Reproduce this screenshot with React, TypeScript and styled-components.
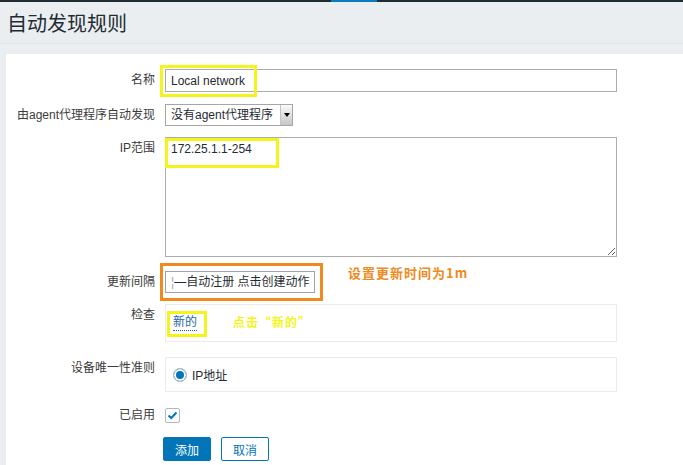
import React from "react";
import styled, { createGlobalStyle } from "styled-components";

const GlobalStyle = createGlobalStyle`
  html, body {
    margin: 0;
    padding: 0;
  }
  body {
    background: #ebeef0;
    font-family: "Liberation Sans", "Noto Sans CJK SC", sans-serif;
    font-size: 12px;
    color: #1f2c33;
    overflow: hidden;
  }
`;

const TopBar = styled.div`
  display: flex;
  height: 2px;
  background: #1f2c33;
`;

const TopBarMark = styled.span`
  margin-left: 331px;
  width: 46px;
  background: #0a7bc2;
`;

const Header = styled.header`
  height: 41px;
  display: flex;
  align-items: center;
  padding-left: 7px;
  border-bottom: 1px solid #dfe3e6;
`;

const Title = styled.h1`
  margin: 0;
  font-family: "Noto Sans CJK SC", sans-serif;
  font-weight: 400;
  font-size: 20px;
  line-height: 26px;
  color: #1f2c33;
`;

const Panel = styled.main`
  margin: 10px 0 0 6px;
  background: #fff;
  padding: 15px 0 4px;
`;

const Row = styled.div<{ $gap: number }>`
  display: grid;
  grid-template-columns: 149px 452px;
  column-gap: 10px;
  margin-top: ${(p) => p.$gap}px;
`;

const Label = styled.label<{ $lh?: number }>`
  text-align: right;
  line-height: ${(p) => p.$lh ?? 22}px;
  color: #3b3b3b;
  white-space: nowrap;
`;

const Field = styled.div`
  position: relative;
  display: flex;
  align-items: center;
`;

const TextInput = styled.input`
  box-sizing: border-box;
  width: 452px;
  height: 23px;
  margin: 0;
  padding: 0 5px;
  border: 1px solid #acacac;
  font-family: "Liberation Sans", "Noto Sans CJK SC", sans-serif;
  font-size: 12px;
  color: #1f2c33;
  outline: none;
`;

const SelectBox = styled.div`
  box-sizing: border-box;
  display: flex;
  width: 128px;
  height: 22px;
  border: 1px solid #a6a6a6;
`;

const SelectText = styled.span`
  flex: 1;
  padding-left: 5px;
  line-height: 20px;
  color: #1f2c33;
  white-space: nowrap;
`;

const SelectArrow = styled.span`
  width: 11px;
  display: flex;
  align-items: center;
  justify-content: center;
  border-left: 1px solid #c4c4c4;
  background: linear-gradient(#fbfbfb, #c6c6c6);

  &::after {
    content: "";
    border-left: 3px solid transparent;
    border-right: 3px solid transparent;
    border-top: 4px solid #000;
  }
`;

const TextArea = styled.textarea`
  box-sizing: border-box;
  display: block;
  width: 452px;
  height: 120px;
  margin: 0;
  padding: 3px 5px;
  border: 1px solid #acacac;
  font-family: "Liberation Sans", "Noto Sans CJK SC", sans-serif;
  font-size: 12px;
  line-height: 16px;
  color: #1f2c33;
  outline: none;
`;

const IntervalInput = styled.div`
  box-sizing: border-box;
  width: 150px;
  height: 22px;
  padding-left: 5px;
  border: 1px solid #9aa4aa;
  overflow: hidden;
  white-space: nowrap;
  line-height: 20px;
  color: #1f2c33;
`;

const Clipped = styled.span`
  color: #9aa4aa;
`;

const ListBox = styled.div<{ $h: number }>`
  box-sizing: border-box;
  position: relative;
  width: 452px;
  height: ${(p) => p.$h}px;
  border: 1px solid #ebebeb;
  padding: 10px 7px 0;
`;

const RadioBox = styled(ListBox)`
  display: flex;
  align-items: center;
  gap: 5px;
  padding-top: 0;
`;

const Link = styled.span`
  display: inline-block;
  line-height: 15px;
  color: #1f65a6;
  border-bottom: 1px dotted #1f65a6;
`;

const Radio = styled.span`
  box-sizing: border-box;
  width: 14px;
  height: 14px;
  border-radius: 50%;
  border: 1px solid #acbbc2;
  background: #0275b8;
  box-shadow: inset 0 0 0 2px #fff;
`;

const Checkbox = styled.span`
  box-sizing: border-box;
  width: 15px;
  height: 15px;
  border: 1px solid #acbbc2;
  border-radius: 2px;
  display: flex;
  align-items: center;
  justify-content: center;
`;

const Buttons = styled.div`
  display: flex;
  gap: 10px;
  margin-left: -2px;
`;

const Button = styled.button<{ $primary?: boolean }>`
  box-sizing: border-box;
  width: 48px;
  height: 24px;
  margin: 0;
  padding: 0;
  border: 1px solid #0275b8;
  border-radius: 2px;
  background: ${(p) => (p.$primary ? "#0275b8" : "#fff")};
  color: ${(p) => (p.$primary ? "#fff" : "#0275b8")};
  font-family: "Noto Sans CJK SC", sans-serif;
  font-size: 12px;
`;

/* annotations drawn over the screenshot */
const Mark = styled.span<{ $color: string; $w: number; $h: number; $x: number; $y: number }>`
  position: absolute;
  box-sizing: border-box;
  left: ${(p) => p.$x}px;
  top: ${(p) => p.$y}px;
  width: ${(p) => p.$w}px;
  height: ${(p) => p.$h}px;
  border: 3px solid ${(p) => p.$color};
  pointer-events: none;
`;

const Note = styled.span<{ $color: string; $x: number; $y: number; $size: number }>`
  position: absolute;
  left: ${(p) => p.$x}px;
  top: ${(p) => p.$y}px;
  font-family: "Noto Sans CJK SC", sans-serif;
  font-weight: 700;
  font-size: ${(p) => p.$size}px;
  line-height: 18px;
  letter-spacing: 1px;
  color: ${(p) => p.$color};
  white-space: nowrap;
`;

const YELLOW = "#f4f41c";
const ORANGE = "#ef8a1d";

const App = () => {
  return (
    <>
      <GlobalStyle />
      <TopBar>
        <TopBarMark />
      </TopBar>
      <Header>
        <Title>自动发现规则</Title>
      </Header>
      <Panel>
        <Row $gap={0}>
          <Label $lh={23}>名称</Label>
          <Field>
            <TextInput defaultValue="Local network" />
            <Mark $color={YELLOW} $x={-5} $y={-4} $w={97} $h={32} />
          </Field>
        </Row>

        <Row $gap={12}>
          <Label>由agent代理程序自动发现</Label>
          <Field>
            <SelectBox>
              <SelectText>没有agent代理程序</SelectText>
              <SelectArrow />
            </SelectBox>
          </Field>
        </Row>

        <Row $gap={11}>
          <Label>IP范围</Label>
          <Field>
            <TextArea defaultValue="172.25.1.1-254" />
            <Mark $color={YELLOW} $x={0} $y={1} $w={114} $h={30} />
          </Field>
        </Row>

        <Row $gap={14}>
          <Label>更新间隔</Label>
          <Field>
            <IntervalInput>
              <Clipped>¦</Clipped>—自动注册 点击创建动作
            </IntervalInput>
            <Mark $color={ORANGE} $x={-5} $y={-8} $w={163} $h={38} />
            <Note $color={ORANGE} $x={183} $y={-7} $size={13}>
              设置更新时间为1m
            </Note>
          </Field>
        </Row>

        <Row $gap={11}>
          <Label>检查</Label>
          <Field>
            <ListBox $h={38}>
              <Link>新的</Link>
              <Mark $color={YELLOW} $x={1} $y={6} $w={40} $h={26} />
              <Note $color={YELLOW} $x={67} $y={8} $size={12}>
                点击“新的”
              </Note>
            </ListBox>
          </Field>
        </Row>

        <Row $gap={15}>
          <Label>设备唯一性准则</Label>
          <Field>
            <RadioBox $h={35}>
              <Radio />
              <span>IP地址</span>
            </RadioBox>
          </Field>
        </Row>

        <Row $gap={12}>
          <Label>已启用</Label>
          <Field>
            <Checkbox>
              <svg width="11" height="9" viewBox="0 0 11 9">
                <polyline
                  points="1.5,4.5 4.2,7 9.5,1.5"
                  fill="none"
                  stroke="#0275b8"
                  strokeWidth="2"
                />
              </svg>
            </Checkbox>
          </Field>
        </Row>

        <Row $gap={11}>
          <span />
          <Buttons>
            <Button $primary>添加</Button>
            <Button>取消</Button>
          </Buttons>
        </Row>
      </Panel>
    </>
  );
};

export default App;
